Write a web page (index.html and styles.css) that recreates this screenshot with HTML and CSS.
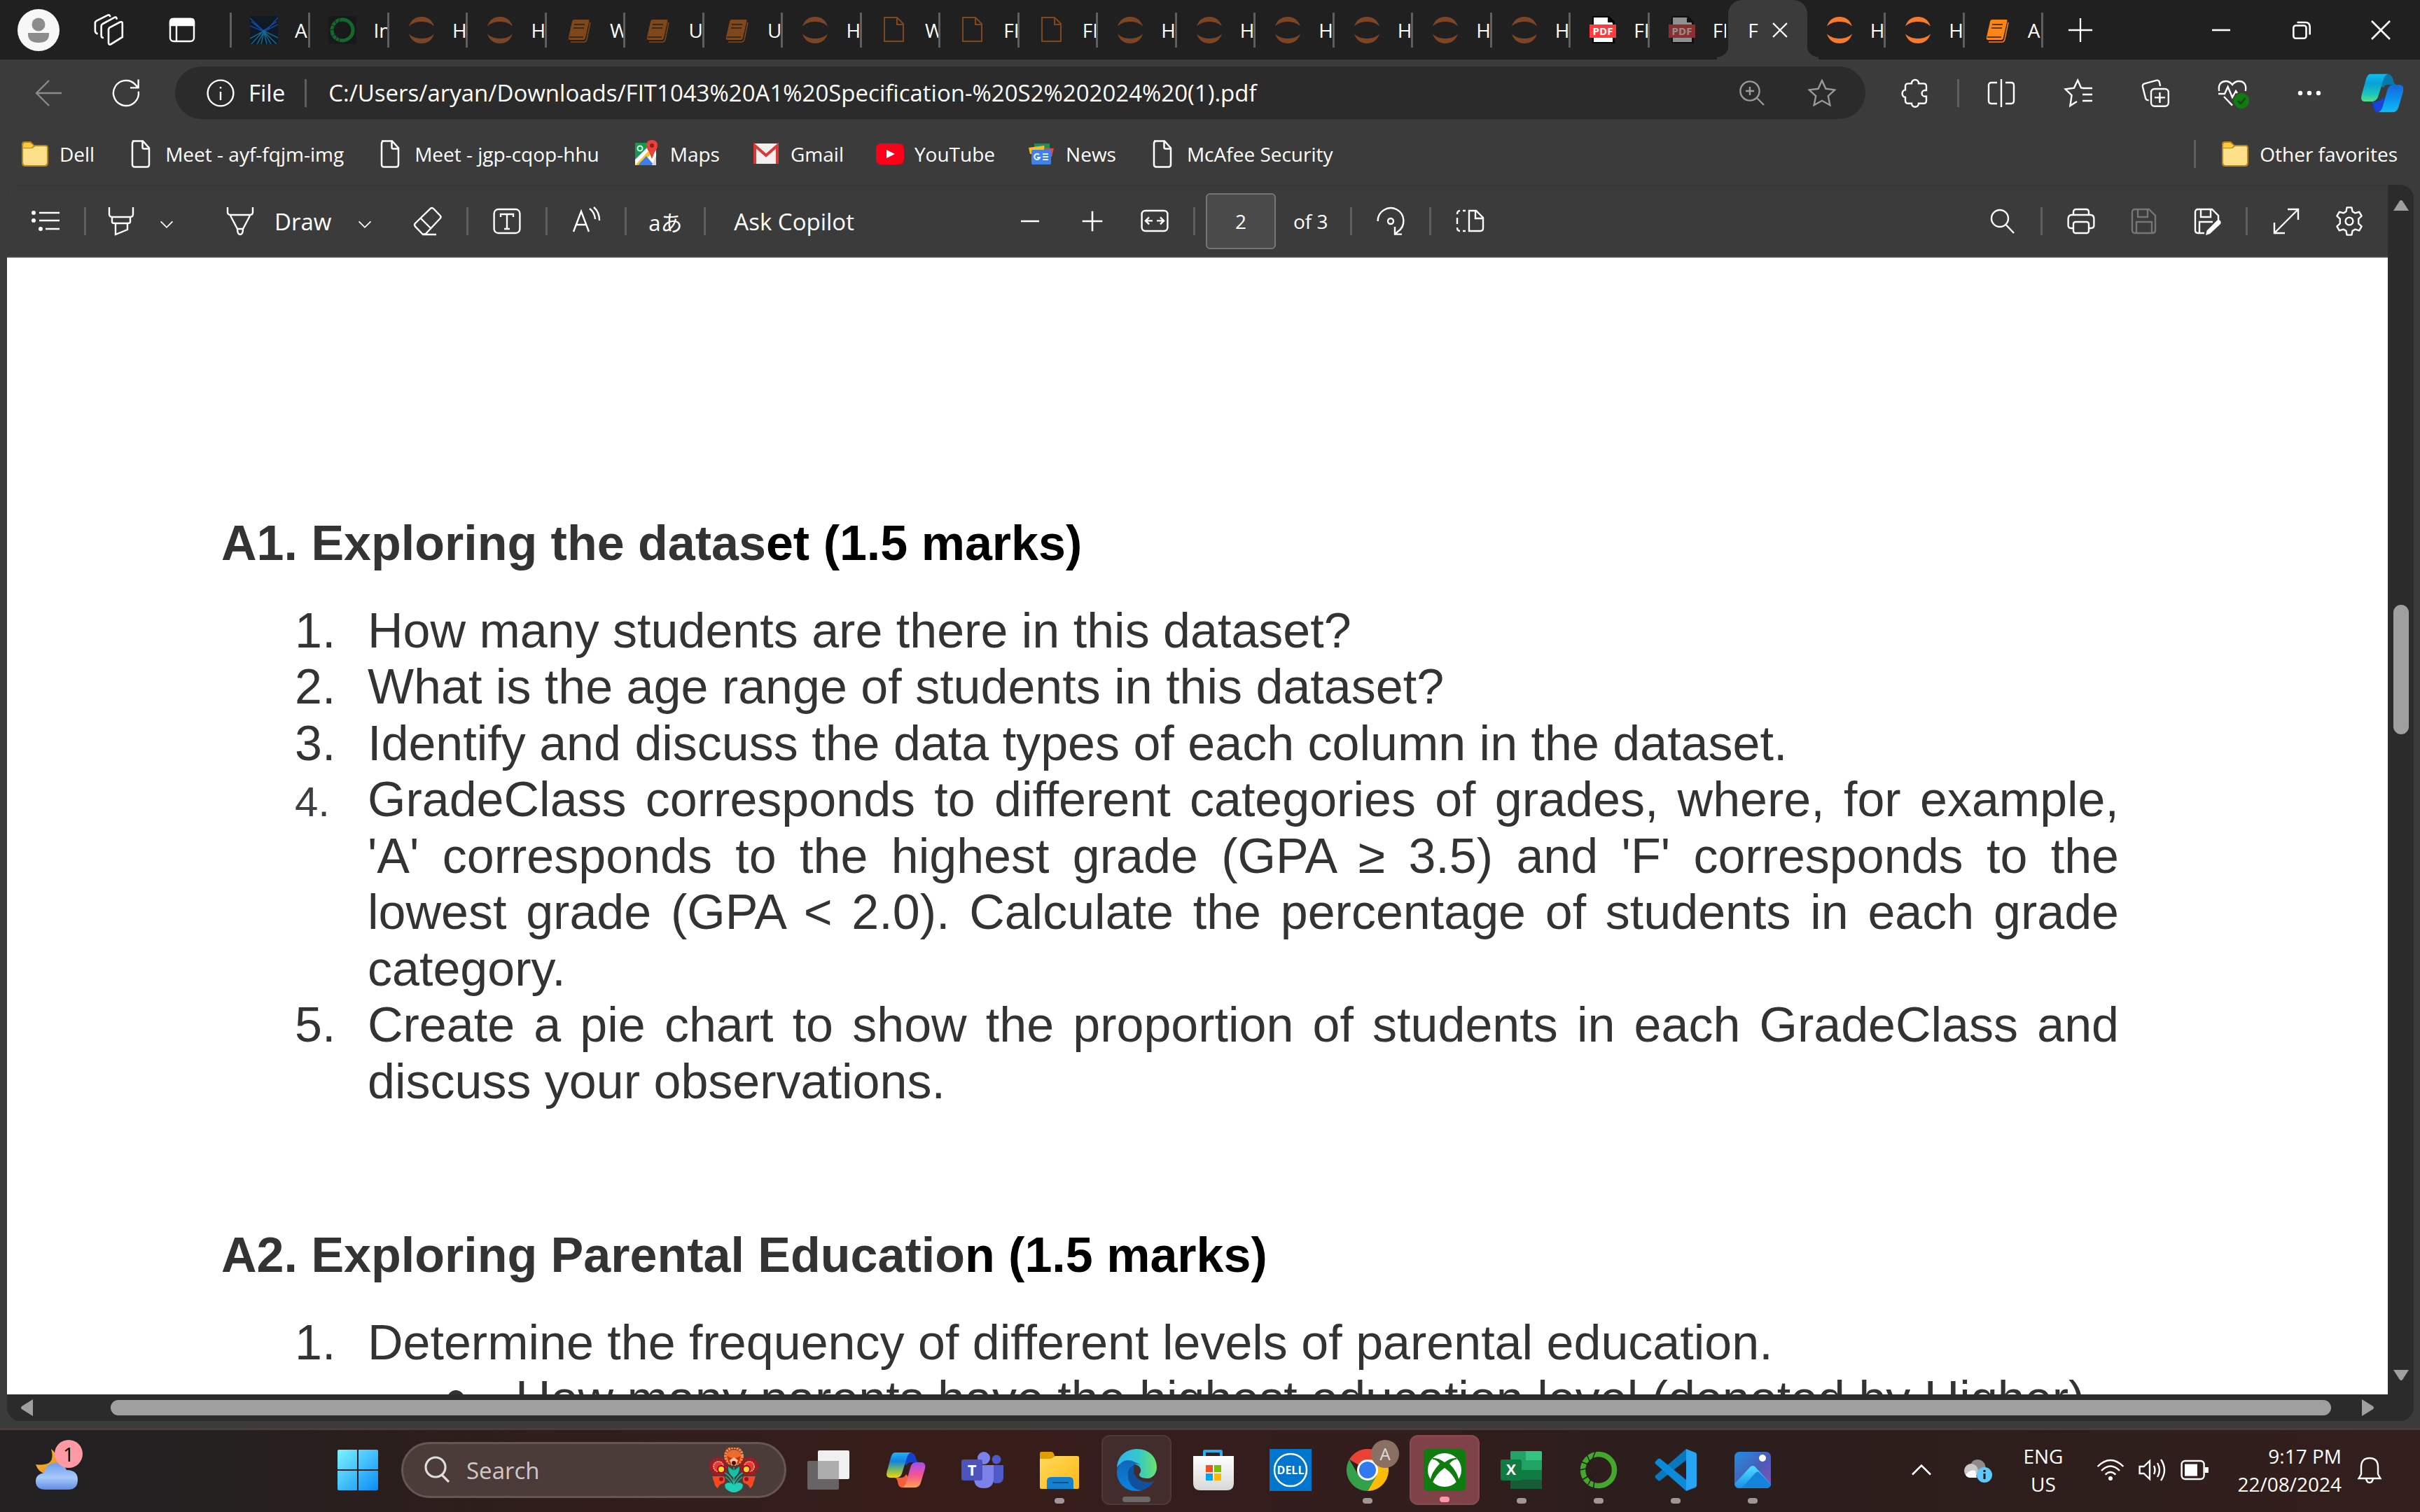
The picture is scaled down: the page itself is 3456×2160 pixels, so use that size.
FILE: index.html
```html
<!DOCTYPE html>
<html lang="en">
<head>
<meta charset="utf-8">
<title>FIT1043 A1 Specification</title>
<link rel="stylesheet" href="styles.css">
</head>
<body>
<svg class="defs" aria-hidden="true">
  <defs>
    <linearGradient id="g-win" x1="0" y1="0" x2="1" y2="1"><stop offset="0" stop-color="#7df3ff"/><stop offset="1" stop-color="#0a8cf5"/></linearGradient>
    <linearGradient id="g-cloud" x1="0" y1="0" x2="0" y2="1"><stop offset="0" stop-color="#6c9cec"/><stop offset=".55" stop-color="#a9caf8"/><stop offset="1" stop-color="#5f8de6"/></linearGradient>
    <linearGradient id="g-moon" x1="0" y1="0" x2="1" y2="1"><stop offset="0" stop-color="#ffc247"/><stop offset="1" stop-color="#e58a0a"/></linearGradient>
    <linearGradient id="g-cp1" x1="0" y1="0" x2="0" y2="1"><stop offset="0" stop-color="#22b0f6"/><stop offset=".35" stop-color="#1484e0"/><stop offset=".7" stop-color="#7cba58"/><stop offset="1" stop-color="#f8d40c"/></linearGradient>
    <linearGradient id="g-cp2" x1="0" y1="0" x2="0" y2="1"><stop offset="0" stop-color="#a24ef0"/><stop offset=".5" stop-color="#f25592"/><stop offset="1" stop-color="#ffa14e"/></linearGradient>
    <linearGradient id="g-cb1" x1="0" y1="0" x2="0" y2="1"><stop offset="0" stop-color="#12bcee"/><stop offset=".35" stop-color="#08a0d8"/><stop offset=".75" stop-color="#1cc8b8"/><stop offset="1" stop-color="#58e084"/></linearGradient>
    <linearGradient id="g-cb2" x1="0" y1="0" x2="0" y2="1"><stop offset="0" stop-color="#1468dc"/><stop offset=".5" stop-color="#0c90ee"/><stop offset="1" stop-color="#12bcf4"/></linearGradient>
    <linearGradient id="g-fold" x1="0" y1="0" x2="1" y2="1"><stop offset="0" stop-color="#ffd95c"/><stop offset="1" stop-color="#fdb913"/></linearGradient>
    <linearGradient id="g-edge" x1="0" y1="0" x2="1" y2="0"><stop offset="0" stop-color="#2fb4f2"/><stop offset=".55" stop-color="#35c8c8"/><stop offset="1" stop-color="#6be36a"/></linearGradient>
    <linearGradient id="g-edge2" x1="0" y1="0" x2="0" y2="1"><stop offset="0" stop-color="#1267b8"/><stop offset="1" stop-color="#0a84e0"/></linearGradient>
    <linearGradient id="g-photo" x1="0" y1="0" x2="1" y2="1"><stop offset="0" stop-color="#1f8fe4"/><stop offset=".55" stop-color="#4a5cb8"/><stop offset="1" stop-color="#8a52b4"/></linearGradient>
    <linearGradient id="g-peak" x1="0" y1="0" x2="0" y2="1"><stop offset="0" stop-color="#4fe0ff"/><stop offset="1" stop-color="#1a8fe8"/></linearGradient>
    <linearGradient id="g-bag" x1="0" y1="0" x2="0" y2="1"><stop offset="0" stop-color="#fff"/><stop offset="1" stop-color="#d8d8d8"/></linearGradient>
  </defs>

  <symbol id="i-jup" viewBox="0 0 40 40"><path d="M2 14.500C5 5 12 1 20 1s15 4 18 13.500C33 10 27 8 20 8S7 10 2 14.500zM2 25.500C5 35 12 39 20 39s15-4 18-13.500C33 30 27 32 20 32S7 30 2 25.500z" fill="currentColor"/></symbol>
  <symbol id="i-book" viewBox="0 0 40 40"><path d="M13 5h20q2 0 1.500 2L29 31q-.5 3-3 3H7q-3 0-2-4l5-22q.7-3 3-3z" fill="currentColor"/><path d="M13 12h15M12 17h15M6 30h20" stroke="#202020" stroke-width="1.500" fill="none"/><path d="M36 9l-5 24q-1 4-4 4H8" fill="none" stroke="currentColor" stroke-width="1.500"/></symbol>
  <symbol id="i-file" viewBox="0 0 40 40"><path d="M6 26V2h18l9 9v25H6V26M24 2v10h9" fill="none" stroke="currentColor" stroke-width="2"/></symbol>
  <symbol id="i-pdf" viewBox="0 0 40 40"><path d="M5 0h24l8 8v31H5z" fill="#000"/><path d="M7 2h20l7 8v27H7z" fill="#fff"/><path d="M27 2v7h7z" fill="#000"/><rect x="1" y="12" width="38" height="19" fill="#ff3b3f"/><text x="20" y="27" text-anchor="middle" font-family="Open Sans, sans-serif" font-weight="700" font-size="15" fill="#fff">PDF</text></symbol>
  <symbol id="i-page" viewBox="0 0 40 40"><path d="M8 1.500h15l9 10V35q0 3.500-3.500 3.500h-17Q8 38.500 8 35V5q0-3.500 3.500-3.500zM22.500 2v8.500q0 2 2 2H32" fill="none" stroke="currentColor" stroke-width="2.500"/></symbol>
  <symbol id="i-folder" viewBox="0 0 40 40"><path d="M1 6q0-4 4-4h9l5 5h16q4 0 4 4v22q0 5-5 5H6q-5 0-5-5z" fill="#b5851a"/><path d="M3 12h13l4-3h15q2 0 2 2v21q0 4-4 4H7q-4 0-4-4z" fill="#ffe08a"/><path d="M3 10V7q0-3 3-3h7l5 4-3 3H3z" fill="#ffc83d"/></symbol>

  <symbol id="i-search" viewBox="0 0 20 20"><circle cx="8.500" cy="8" r="6"/><path d="M12.800 12.500l5.700 6"/></symbol>
  <symbol id="i-chev" viewBox="0 0 20 20"><path d="M3 7l7 7 7-7"/></symbol>
  <symbol id="i-star" viewBox="0 0 20 20"><path d="M10 1l2.700 5.900 6.500.8-4.800 4.400 1.300 6.500L10 15.400l-5.700 3.200 1.300-6.500L.8 7.700l6.500-.8z"/></symbol>
  <symbol id="i-save" viewBox="0 0 20 20"><path d="M3.500 1.500h10L18 6v10.500q0 2-2 2H3.500q-2 0-2-2v-13q0-2 2-2zM5.500 1.500v5.500h7V1.500M4.500 18.500v-8h11v8"/></symbol>
  <symbol id="i-copilot" viewBox="0 0 60 60"><path d="M37 5q6 0 8 8 1 5 4 6H38q-4 0-6 4l-4-2 4-13q1-3 5-3z" fill="#1440cc"/><path d="M15 5h24q-5 0-7 8l-7 22q-2 6-9 6H8q-7 0-4-10l5-18q2-8 6-8z" fill="url(#g-cp1)"/><path d="M15 41h8q6 0 8-5l3 4-4 12q-1 3-5 3-5 0-6-8-1-5-4-6z" fill="#f4603c"/><path d="M45 19h7q8 0 6 9l-6 20q-2 7-8 7H25q4-1 6-7l6-21q2-8 8-8z" fill="url(#g-cp2)"/></symbol>
  <symbol id="i-copilot-blue" viewBox="3 4 55 52"><path d="M37 5q6 0 8 8 1 5 4 6H38q-4 0-6 4l-4-2 4-13q1-3 5-3z" fill="#0878a8"/><path d="M15 5h24q-5 0-7 8l-7 22q-2 6-9 6H8q-7 0-4-10l5-18q2-8 6-8z" fill="url(#g-cb1)"/><path d="M15 41h8q6 0 8-5l3 4-4 12q-1 3-5 3-5 0-6-8-1-5-4-6z" fill="#1446dc"/><path d="M45 19h7q8 0 6 9l-6 20q-2 7-8 7H25q4-1 6-7l6-21q2-8 8-8z" fill="url(#g-cb2)"/></symbol>
  <symbol id="i-ring" viewBox="0 0 40 40"><circle cx="20" cy="20" r="15" fill="none" stroke="currentColor" stroke-width="5"/><path d="M3 12l10 4M2 20l9-2M5 29l8-5M10 34l4-8M9 6l4 9M17 2l-3 8M15 38l1-8" stroke="#1c1f1e" stroke-width="1" fill="none"/></symbol>
</svg>

<header class="tabstrip">
  <div class="tab-tools">
    <button class="avatar" aria-label="Profile"><svg viewBox="0 0 60 60"><circle cx="30" cy="30" r="30" fill="#f7f7f7"/><circle cx="30" cy="22" r="9.500" fill="#8c8c8c"/><path d="M15 34h30v2q0 12-15 12T15 36z" fill="#8c8c8c"/></svg></button>
    <button class="icon-btn" aria-label="Workspaces"><svg class="ic lg" viewBox="0 0 20 20"><path d="M10.500 8.500l7-3.700q1.500-.6 1.500 1v8.700l-7.500 4.700q-1.500.6-1.500-1v-8.700zM6.800 15q-1.500 0-1.500-1.600V7.500q0-1 1-1.600l8-4.400M14.300 1.500q1 0 1 1.600M3 12.500Q1.300 12 1.300 10.500V5.500q0-1 1-1.600L9.500.3q1.500-.5 1.500 1.200"/></svg></button>
    <button class="icon-btn" aria-label="Tab actions"><svg class="ic" viewBox="0 0 20 20"><rect x="1.500" y="2" width="17" height="16" rx="2.500"/><path d="M1.500 6V4Q1.500 2 3.500 2h13q2 0 2 2v2.500h-17z" fill="currentColor"/><path d="M6 6v12"/></svg></button>
  </div>
  <nav class="tabs" aria-label="Open tabs">
    <a class="tab" href="#"><svg class="fav" viewBox="0 0 40 40"><path d="M0 0h40v40H0z" fill="#101a24"/><path d="M0 3l18 17h6L40 2M2 8l17 13L38 8M0 14l20 8 20-10" stroke="#1746a0" stroke-width="1.500" fill="none"/><path d="M2 40l17-19L38 40M10 40l10-18 10 18M0 32l20-11 20 10M16 40l4-18 4 18" stroke="#156a90" stroke-width="1.500" fill="none"/></svg><span>A</span></a>
    <a class="tab" href="#"><svg class="fav green"><use href="#i-ring"/></svg><span>In</span></a>
    <a class="tab" href="#"><svg class="fav rust"><use href="#i-jup"/></svg><span>H</span></a>
    <a class="tab" href="#"><svg class="fav rust"><use href="#i-jup"/></svg><span>H</span></a>
    <a class="tab" href="#"><svg class="fav brown"><use href="#i-book"/></svg><span>W</span></a>
    <a class="tab" href="#"><svg class="fav brown"><use href="#i-book"/></svg><span>U</span></a>
    <a class="tab" href="#"><svg class="fav brown"><use href="#i-book"/></svg><span>U</span></a>
    <a class="tab" href="#"><svg class="fav rust"><use href="#i-jup"/></svg><span>H</span></a>
    <a class="tab" href="#"><svg class="fav brown"><use href="#i-file"/></svg><span>W</span></a>
    <a class="tab" href="#"><svg class="fav brown"><use href="#i-file"/></svg><span>FI</span></a>
    <a class="tab" href="#"><svg class="fav brown"><use href="#i-file"/></svg><span>FI</span></a>
    <a class="tab" href="#"><svg class="fav rust"><use href="#i-jup"/></svg><span>H</span></a>
    <a class="tab" href="#"><svg class="fav rust"><use href="#i-jup"/></svg><span>H</span></a>
    <a class="tab" href="#"><svg class="fav rust"><use href="#i-jup"/></svg><span>H</span></a>
    <a class="tab" href="#"><svg class="fav rust"><use href="#i-jup"/></svg><span>H</span></a>
    <a class="tab" href="#"><svg class="fav rust"><use href="#i-jup"/></svg><span>H</span></a>
    <a class="tab" href="#"><svg class="fav rust"><use href="#i-jup"/></svg><span>H</span></a>
    <a class="tab" href="#"><svg class="fav"><use href="#i-pdf"/></svg><span>FI</span></a>
    <a class="tab plain" href="#"><svg class="fav dim"><use href="#i-pdf"/></svg><span>FI</span></a>
    <div class="tab active"><span>F</span><button class="tab-close" aria-label="Close tab"><svg class="ic" viewBox="0 0 20 20"><path d="M1 1l18 18M19 1L1 19"/></svg></button></div>
    <a class="tab" href="#"><svg class="fav orange"><use href="#i-jup"/></svg><span>H</span></a>
    <a class="tab" href="#"><svg class="fav orange"><use href="#i-jup"/></svg><span>H</span></a>
    <a class="tab" href="#"><svg class="fav amber"><use href="#i-book"/></svg><span>A</span></a>
  </nav>
  <div class="window-tools">
    <button class="new-tab" aria-label="New tab"><svg class="ic" viewBox="0 0 20 20"><path d="M10 1v18M1 10h18"/></svg></button>
    <div class="window-btns">
      <button aria-label="Minimize"><svg class="ic sm" viewBox="0 0 20 20"><path d="M0 10h20"/></svg></button>
      <button aria-label="Restore"><svg class="ic sm" viewBox="0 0 20 20"><rect x="1" y="5" width="14" height="14" rx="2.500"/><path d="M5 1.500h9q5 0 5 5V15"/></svg></button>
      <button aria-label="Close"><svg class="ic sm" viewBox="0 0 20 20"><path d="M0 0l20 20M20 0L0 20"/></svg></button>
    </div>
  </div>
</header>

<div class="address-row">
  <button class="icon-btn grey" aria-label="Back"><svg class="ic" viewBox="0 0 20 20"><path d="M10 1l-9 9 9 9M1 10h18"/></svg></button>
  <button class="icon-btn" aria-label="Refresh"><svg class="ic" viewBox="0 0 20 20"><path d="M18.900 8.800A9 9 0 1 1 16.500 3.800L18.500 6M18.800.3v5.900H13"/></svg></button>
  <div class="address">
    <svg class="ic" viewBox="0 0 20 20"><circle cx="10" cy="10" r="9.200"/><path d="M10 9v6M10 5.500v1.300"/></svg>
    <span class="scheme">File</span>
    <input class="url" type="text" aria-label="Address" value="C:/Users/aryan/Downloads/FIT1043%20A1%20Specification-%20S2%202024%20(1).pdf">
    <button class="in-addr" aria-label="Zoom"><svg class="ic" viewBox="0 0 20 20"><circle cx="8.500" cy="8.500" r="6.800"/><path d="M13.500 13.500l5 5M8.500 5.500v6M5.500 8.500h6"/></svg></button>
    <button class="in-addr" aria-label="Add favorite"><svg class="ic"><use href="#i-star"/></svg></button>
  </div>
  <button class="icon-btn" aria-label="Extensions"><svg class="ic" viewBox="0 0 20 20"><path d="M7.500 3.200V3a2.500 2.500 0 0 1 5 0v.2H16q2 0 2 2V8h-1a2.200 2.200 0 0 0 0 4.400h1v3q0 2-2 2h-3.500a2.500 2.500 0 0 1-5 0H5q-2 0-2-2V13a2.700 2.700 0 0 1 0-5.300V5.200q0-2 2-2z"/></svg></button>
  <i class="sep"></i>
  <button class="icon-btn" aria-label="Split screen"><svg class="ic" viewBox="0 0 20 20"><path d="M10 0v20M7 2.500H3q-2 0-2 2v11q0 2 2 2h4M13 2.500h4q2 0 2 2v11q0 2-2 2h-4"/></svg></button>
  <button class="icon-btn" aria-label="Favorites"><svg class="ic" viewBox="0 0 20 20"><path d="M14 6.500l-2-.3L9.600.8 7 6.300l-6.200.9 4.500 4.400L4.200 19l4.800-3M13 6.500h7M13 11h7M13 15.500h7"/></svg></button>
  <button class="icon-btn" aria-label="Collections"><svg class="ic" viewBox="0 0 20 20"><rect x="7" y="7" width="12.400" height="12.400" rx="2.500"/><path d="M13.200 9.500v7.500M9.500 13.200H17M13.500 5L13 2.500q-.4-2-2.300-1.600L2.500 3.200Q.6 3.700 1 5.500l2 8q.5 1.800 2.300 1.500"/></svg></button>
  <button class="icon-btn" aria-label="Browser essentials"><svg class="ic" viewBox="0 0 20 20"><path d="M.6 8.500C-.5 3 3 1.500 5.300 1.500 8 1.500 10 4 10 4s2-2.500 4.700-2.500c2.500 0 5.800 1.500 4.700 7M0 10.500h4.500L6.800 5.500l3.200 7.500 2.500-4.500 1 1.500M4 12.500l6 6.300"/><circle cx="16.500" cy="15.500" r="5.500" fill="#107c10" stroke="none"/><path d="M14 15.500l2 2 3.300-4" stroke="#1b3f1b"/></svg></button>
  <button class="icon-btn" aria-label="Settings and more"><svg class="ic" viewBox="0 0 20 20"><g fill="currentColor" stroke="none"><circle cx="3.500" cy="10" r="1.600"/><circle cx="10" cy="10" r="1.600"/><circle cx="16.500" cy="10" r="1.600"/></g></svg></button>
  <button class="icon-btn copilot-btn" aria-label="Copilot"><svg class="app"><use href="#i-copilot-blue"/></svg></button>
</div>

<nav class="bookmarks" aria-label="Favorites bar">
  <a href="#"><svg class="bm"><use href="#i-folder"/></svg>Dell</a>
  <a href="#"><svg class="bm"><use href="#i-page"/></svg>Meet - ayf-fqjm-img</a>
  <a href="#"><svg class="bm"><use href="#i-page"/></svg>Meet - jgp-cqop-hhu</a>
  <a href="#"><svg class="bm" viewBox="0 0 40 40"><path d="M5 4h30v32H5z" fill="#fff"/><path d="M5 4h24L5 28z" fill="#149a52"/><path d="M5 36l30-32v8L13 36z" fill="#fbc02d"/><path d="M9 36l12-13 11 13z" fill="#3f7ee8"/><path d="M29 36h6V22z" fill="#d6d9dc"/><circle cx="12" cy="12" r="3.500" fill="none" stroke="#d8f0e0" stroke-width="2"/><path d="M29 0q8 0 8 8 0 4-4 9l-4 10-4-10q-4-5-4-9 0-8 8-8z" fill="#e8413a"/><circle cx="29" cy="8" r="3" fill="#8c1d18"/></svg>Maps</a>
  <a href="#"><svg class="bm" viewBox="0 0 40 40"><rect x="2" y="5" width="36" height="29" rx="2" fill="#f1efef"/><path d="M4 34V8l16 14L36 8v26" fill="none" stroke="#d93a36" stroke-width="4"/></svg>Gmail</a>
  <a href="#"><svg class="bm" viewBox="0 0 40 40"><rect y="5" width="40" height="30" rx="7" fill="#fb0019"/><path d="M15 14l12 6-12 6z" fill="#fff"/></svg>YouTube</a>
  <a href="#"><svg class="bm" viewBox="0 0 40 40"><path d="M10 5h22v14H10z" fill="#13955a"/><path d="M2 11l22-3 3 12H4z" fill="#fbbc1c"/><path d="M24 11l14 1-3 12H24z" fill="#e4463a"/><rect x="6" y="14" width="28" height="21" rx="2" fill="#3f80ee"/><path d="M17 21a4 4 0 1 0 1 4h-4M22 20h8M22 24h8M22 28h8" stroke="#e6f0ff" stroke-width="2.200" fill="none"/></svg>News</a>
  <a href="#"><svg class="bm"><use href="#i-page"/></svg>McAfee Security</a>
  <div class="other"><i class="sep"></i><a href="#"><svg class="bm"><use href="#i-folder"/></svg>Other favorites</a></div>
</nav>

<main class="viewer">
  <div class="viewer-main">
    <div class="pdf-toolbar">
      <button class="tool" aria-label="Contents"><svg class="ic" viewBox="0 0 20 20"><path d="M5.500 4H20M5.500 9.500H20M10 15.500h10"/><g fill="currentColor" stroke="none"><circle cx="1.500" cy="4" r="1.500"/><circle cx="1.500" cy="9.500" r="1.500"/><circle cx="6.500" cy="15.500" r="1.500"/></g></svg></button>
      <i class="sep"></i>
      <button class="tool mid" aria-label="Highlight"><svg class="ic" viewBox="0 0 20 20"><path d="M1.500 0v5q0 2 2 2h13q2 0 2-2V0M3.500 7v3.500q0 1 2 1h9q2 0 2-1V7M6 11.500v8l8.500-3.500v-4.500"/></svg></button>
      <button class="tool drop" aria-label="Highlight colors"><svg class="ic tiny"><use href="#i-chev"/></svg></button>
      <button class="draw"><svg class="ic" viewBox="0 0 20 20"><path d="M1 0v3.500q0 2 2 2h14q2 0 2-2V0M3 6l5 9.500h4L17 6M8 15.500q0 4 2 4t2-4"/></svg>Draw</button>
      <button class="tool drop" aria-label="Draw options"><svg class="ic tiny"><use href="#i-chev"/></svg></button>
      <button class="tool eraser" aria-label="Erase"><svg class="ic" viewBox="0 0 20 20"><path d="M1 11.500L12 .8q1-.8 2 .2l4.800 5q1 1 0 2L8.500 19l-2 .5-5.500-5.700q-1-1.200 0-2.300zM5 8l7.500 7.500M6.500 19.500H16"/></svg></button>
      <i class="sep"></i>
      <button class="tool" aria-label="Add text"><svg class="ic" viewBox="0 0 20 20"><rect x=".8" y="1.500" width="18.400" height="17" rx="3"/><path d="M5.500 7V5h9v2M10 5v10.500M8 15.500h4"/></svg></button>
      <i class="sep"></i>
      <button class="tool" aria-label="Read aloud"><svg class="ic" viewBox="0 0 20 20"><path d="M1 17.500L6.500 3 12 17.500M3 12.500h7M12.500 1q3.500 2.500 4 7.500M15.500 0q4 3.500 4 9.500"/></svg></button>
      <i class="sep"></i>
      <button class="tool translate" aria-label="Translate">aあ</button>
      <i class="sep"></i>
      <button class="ask">Ask Copilot</button>
      <div class="zoom-group">
        <button class="tool" aria-label="Zoom out"><svg class="ic sm" viewBox="0 0 20 20"><path d="M0 10h20"/></svg></button>
        <button class="tool" aria-label="Zoom in"><svg class="ic sm" viewBox="0 0 20 20"><path d="M10 -1v22M-1 10h22"/></svg></button>
        <button class="tool" aria-label="Fit to width"><svg class="ic" viewBox="0 0 20 20"><rect x=".8" y="2.500" width="18.400" height="14.500" rx="2.500"/><path d="M8.500 9.700H4M6 7.200L3.500 9.700 6 12.200M11.500 9.700H16M14 7.200l2.500 2.500-2.500 2.500"/></svg></button>
      </div>
      <i class="sep"></i>
      <input class="page-no" type="text" aria-label="Page number" value="2"><span class="page-of">of 3</span>
      <i class="sep"></i>
      <button class="tool" aria-label="Rotate"><svg class="ic" viewBox="0 0 20 20"><path d="M.8 10A9.200 9.200 0 1 1 15 17.500L13.500 19M13 14v5.300h5"/><circle cx="10" cy="10" r="2"/></svg></button>
      <i class="sep"></i>
      <button class="tool" aria-label="Page view"><svg class="ic" viewBox="0 0 20 20"><path d="M9.500 2.500h5l5 5V15q0 2-2 2h-8zM14 2.500V8h5.500M7 2.500H5M3 2.500Q1 2.500 1 5M1 7.500V12M1 14.500Q1 17 3 17M5 17h2"/></svg></button>
      <div class="tool-end">
        <button class="tool" aria-label="Find"><svg class="ic"><use href="#i-search"/></svg></button>
        <i class="sep"></i>
        <div class="tool-group">
          <button class="tool" aria-label="Print"><svg class="ic" viewBox="0 0 20 20"><path d="M4.500 5.500V3.500q0-2 2-2h7q2 0 2 2v2M4.500 15H3q-2.200 0-2.200-2V8.500q0-3 2.500-3h13.400q2.500 0 2.500 3V13q0 2-2.200 2h-1.500"/><rect x="4.500" y="10.500" width="11" height="8" rx="1.500"/></svg></button>
          <button class="tool faint" aria-label="Save"><svg class="ic"><use href="#i-save"/></svg></button>
          <button class="tool" aria-label="Save as"><svg class="ic" viewBox="0 0 20 20"><path d="M18 9V6l-4.500-4.500h-10q-2 0-2 2v13q0 2 2 2H8M5.500 1.500v5.500h7V1.500M4.500 18.500v-8H14"/><path d="M18.500 9q2 1 1 3L12 19l-3 1 .8-3.200L17 9.500q.8-.8 1.500-.5z" fill="currentColor" stroke="none"/></svg></button>
        </div>
        <i class="sep"></i>
        <div class="tool-group">
          <button class="tool" aria-label="Full screen"><svg class="ic" viewBox="0 0 20 20"><path d="M1.500 18.500l17-17M11 1.500h7.500V9M1.500 11v7.500H9"/></svg></button>
          <button class="tool" aria-label="PDF settings"><svg class="ic" viewBox="0 0 20 20"><circle cx="10" cy="10" r="2.700"/><path d="M8.300.2h3.400l.6 2.900 1.900 1.100 2.900-.9 1.700 3-2.200 2v3.400l2.200 2-1.700 3-2.900-.9-1.900 1.100-.6 2.900H8.300l-.6-2.900-1.900-1.100-2.900.9-1.700-3 2.200-2V8.300l-2.200-2 1.700-3 2.900.9 1.900-1.100z" stroke-linejoin="round"/></svg></button>
        </div>
      </div>
    </div>

    <article class="page">
      <h2>A1. Exploring the datas<span class="ink">et (1.5 marks)</span></h2>
      <ol class="tasks">
        <li><span class="num">1.</span><p>How many students are there in this dataset?</p></li>
        <li><span class="num">2.</span><p>What is the age range of students in this dataset?</p></li>
        <li><span class="num">3.</span><p>Identify and discuss the data types of each column in the dataset.</p></li>
        <li><span class="num minor">4.</span><p>GradeClass corresponds to different categories of grades, where, for example, 'A' corresponds to the highest grade (GPA ≥ 3.5) and 'F' corresponds to the lowest grade (GPA &lt; 2.0). Calculate the percentage of students in each grade category.</p></li>
        <li><span class="num">5.</span><p>Create a pie chart to show the proportion of students in each GradeClass and discuss your observations.</p></li>
      </ol>
      <h2>A2. Exploring Parental Educatio<span class="ink">n (1.5 marks)</span></h2>
      <ol class="tasks">
        <li><span class="num">1.</span><div><p>Determine the frequency of different levels of parental education.</p>
          <ul class="subtasks"><li>How many parents have the highest education level (denoted by Higher)</li></ul></div></li>
      </ol>
    </article>

    <div class="hscroll">
      <svg class="arrow" viewBox="0 0 20 24"><path d="M19 0v24L3 14q-2-2 0-4z"/></svg>
      <div class="hthumb"></div>
      <svg class="arrow" viewBox="0 0 20 24"><path d="M1 0v24l16-10q2-2 0-4z"/></svg>
    </div>
  </div>
  <div class="vscroll">
    <svg class="arrow" viewBox="0 0 24 20"><path d="M1 17h22L14 3q-2-2-4 0z"/></svg>
    <div class="vtrack"><div class="vthumb"></div></div>
    <svg class="arrow" viewBox="0 0 24 20"><path d="M1 3h22L14 17q-2 2-4 0z"/></svg>
  </div>
</main>

<footer class="taskbar">
  <button class="weather" aria-label="Weather"><svg class="app" viewBox="0 0 60 60"><path d="M22 0q6 20-10 22-6 1-12 0 4 12 14 13 18 0 20-16Q28 4 22 0z" fill="url(#g-moon)"/><path d="M14 58Q0 58 0 46q0-10 12-12 3-14 17-14 11 0 15 10 16 0 16 14 0 14-14 14z" fill="url(#g-cloud)"/></svg><span class="badge">1</span></button>
  <nav class="apps" aria-label="Taskbar">
    <button class="tile" aria-label="Start"><svg class="app" viewBox="0 0 60 60"><path d="M1 3q0-2 2-2h26v28H1zM31 1h26q2 0 2 2v26H31zM1 31h28v28H3q-2 0-2-2zM31 31h28v26q0 2-2 2H31z" fill="url(#g-win)"/></svg></button>
    <label class="search-pill"><svg class="ic" viewBox="0 0 20 20"><circle cx="9" cy="8" r="7"/><path d="M13.500 13.500l5 5"/></svg><input type="text" placeholder="Search" aria-label="Search">
      <svg class="flower" viewBox="0 0 72 64"><path d="M36 28v30M36 52Q32 40 20 34M36 52q4-12 16-18M36 56Q30 46 24 42M36 56q6-10 12-14" stroke="#13b8a0" stroke-width="1.500" fill="none"/><path d="M28 27l8 6 8-6q1 10-8 16-9-6-8-16z" fill="#15c0a4"/><path d="M36 33v10M23 53q5-6 13 0 8-6 13 0l-1 5q-6 6-12 6t-12-6z" fill="#1fcfb4"/><circle cx="36" cy="14" r="11" fill="#f06a2c"/><circle cx="36" cy="12" r="12" fill="none" stroke="#ff8440" stroke-width="4" stroke-dasharray="3 1"/><path d="M26 12l10 4 10-4-3 10-7 4-7-4z" fill="#c23410"/><path d="M30 18l6-4 6 4-3 7h-6z" fill="#ffc4a4"/><circle cx="36" cy="22" r="3" fill="#5a0a0a"/><g fill="none"><circle cx="14" cy="27" r="8" fill="#e23a34"/><circle cx="14" cy="27" r="11" stroke="#c2101e" stroke-width="4" stroke-dasharray="3 1"/><circle cx="14" cy="27" r="7" stroke="#ff8a70" stroke-width="2" stroke-dasharray="2 1"/><circle cx="58" cy="27" r="8" fill="#e23a34"/><circle cx="58" cy="27" r="11" stroke="#c2101e" stroke-width="4" stroke-dasharray="3 1"/><circle cx="58" cy="27" r="7" stroke="#ff8a70" stroke-width="2" stroke-dasharray="2 1"/></g><circle cx="18" cy="31" r="6" fill="#a00818"/><circle cx="54" cy="31" r="6" fill="#a00818"/><circle cx="18" cy="31" r="4" fill="#ffd42c"/><circle cx="54" cy="31" r="4" fill="#ffd42c"/><path d="M5 41l17 0q3 6-1 10-5 0-8 7-4-2-5-8zM67 41l-17 0q-3 6 1 10 5 0 8 7 4-2 5-8z" fill="#f8481e"/><circle cx="18" cy="45" r="3" fill="#a0102c"/><circle cx="54" cy="45" r="3" fill="#a0102c"/></svg></label>
    <button class="tile" aria-label="Task view"><svg class="app" viewBox="0 0 60 60"><rect x="15" y="2" width="45" height="41" rx="2" fill="#f0f0f0"/><rect y="17" width="45" height="41" rx="2" fill="#666464"/><path d="M15 17h30v26H15z" fill="#adadad"/></svg></button>
    <button class="tile" aria-label="Copilot"><svg class="app"><use href="#i-copilot"/></svg></button>
    <button class="tile" aria-label="Teams"><svg class="app" viewBox="0 0 60 60"><circle cx="50" cy="15" r="6.500" fill="#5059c9"/><path d="M42 23h18v17q0 9-9 9-7 0-9-6z" fill="#5059c9"/><circle cx="32" cy="13" r="9" fill="#7b83eb"/><path d="M18 23h28v19q0 14-14 14T18 42z" fill="#7b83eb"/><rect y="15" width="30" height="30" rx="3" fill="#4b53bc"/><text x="15" y="38" text-anchor="middle" font-family="Open Sans, sans-serif" font-weight="700" font-size="22" fill="#fff">T</text></svg></button>
    <button class="tile" aria-label="File Explorer"><svg class="app" viewBox="0 0 60 60"><path d="M2 7q0-3 2-3h14q3 0 4 3l3 8H2z" fill="#e0a100"/><path d="M2 14h16l6-4h32q2 0 2 2v43q0 2-2 2H4q-2 0-2-2z" fill="url(#g-fold)"/><path d="M12 57V46q0-6 6-6h26q6 0 6 6v11z" fill="#1380d0"/><path d="M20 48h23" stroke="#0a4f8c" stroke-width="2"/></svg><i class="dot"></i></button>
    <button class="tile current" aria-label="Microsoft Edge"><svg class="app" viewBox="0 0 60 60"><path d="M2 27C3 9 16 0 31 0c17 0 28 12 28 26 0 9-6 16-13 16-8 0-13-3-12-6 5-6 1-13-6-14C16 17 5 20 2 27z" fill="url(#g-edge)"/><path d="M28 19C16 11 2 20 2 33c0 15 12 27 27 27 4 0 6 0 9-1-14-2-21-13-20-23 1-8 6-12 10-14 3-1 6 0 8 2-1-2-4-4-8-5z" fill="url(#g-edge2)"/><path d="M27 23c-8 3-10 9-9 16 1 11 8 19 18 20 9-1 15-7 19-13-13 4-27-2-29-14 0-4 0-6 1-9z" fill="#11509c"/></svg><i class="dot wide"></i></button>
    <button class="tile" aria-label="Microsoft Store"><svg class="app" viewBox="0 0 60 60"><path d="M15 13V4q0-3 3-3h22q3 0 3 3v9h-4V5H19v8z" fill="#27b0f4"/><path d="M1 10h58v38q0 11-10 11H11Q1 59 1 48z" fill="url(#g-bag)"/><path d="M19 23h10v10H19z" fill="#f25022"/><path d="M31 23h10v10H31z" fill="#7fba00"/><path d="M19 35h10v10H19z" fill="#00a4ef"/><path d="M31 35h10v10H31z" fill="#ffb900"/></svg></button>
    <button class="tile" aria-label="Dell"><svg class="app" viewBox="0 0 60 60"><path d="M0 0h60v60H0z" fill="#0076ce"/><circle cx="30" cy="30" r="23" fill="none" stroke="#fff" stroke-width="2.500"/><text x="30" y="36" text-anchor="middle" font-family="Open Sans, sans-serif" font-weight="700" font-size="16" fill="#fff">DELL</text></svg></button>
    <button class="tile" aria-label="Chrome"><svg class="app" viewBox="0 0 60 60"><path d="M30 30L4 15A30 30 0 0 1 56 15H30z" fill="#ea4335"/><path d="M30 30L30 15H56A30 30 0 0 1 30 60L43 37.500z" fill="#fbbc05"/><path d="M30 45L43 37.500 30 60A30 30 0 0 1 4 15L17 37.500z" fill="#34a04a"/><circle cx="30" cy="30" r="15" fill="#fff"/><circle cx="30" cy="30" r="12" fill="#3079ee"/></svg><span class="badge user">A</span><i class="dot"></i></button>
    <button class="tile alert" aria-label="Xbox"><svg class="app" viewBox="0 0 60 60"><rect width="60" height="60" rx="6" fill="#107c10"/><circle cx="30" cy="30" r="24" fill="#fff"/><path d="M13 13q8-1 17 6 9-7 17-6 1 2-2 2-4 1-8 6 12 12 14 26l-3 3Q43 36 30 27 17 36 12 50l-3-3q2-14 14-26-4-5-8-6-3 0-2-2z" fill="#107c10"/></svg><i class="dot pink"></i></button>
    <button class="tile" aria-label="Excel"><svg class="app" viewBox="0 0 60 60"><rect x="14" y="3" width="45" height="54" rx="2" fill="#21a366"/><path d="M36 3h21q2 0 2 2v11H36z" fill="#33c481"/><path d="M14 30h22v14H14zM36 30h23v14H36z" fill="#107c41"/><path d="M14 44h45v11q0 2-2 2H16q-2 0-2-2z" fill="#185c37"/><rect y="15" width="30" height="30" rx="3" fill="#107c41"/><text x="15" y="37" text-anchor="middle" font-family="Open Sans, sans-serif" font-weight="700" font-size="21" fill="#fff">X</text></svg><i class="dot"></i></button>
    <button class="tile lime" aria-label="Anaconda"><svg class="app"><use href="#i-ring"/></svg><i class="dot"></i></button>
    <button class="tile" aria-label="Visual Studio Code"><svg class="app" viewBox="0 0 60 60"><path d="M45 0v16L8 45q-2 1-3 0L1 41q-1-2 0-3z" fill="#0877bc"/><path d="M45 60V44L8 14q-2-1-3 0l-4 4q-1 2 0 3z" fill="#0a8ad8"/><path d="M45 0l13 5q2 1 2 3v44q0 2-2 3l-13 5z" fill="#27a5f4"/></svg><i class="dot"></i></button>
    <button class="tile" aria-label="Photos"><svg class="app" viewBox="0 0 60 60"><rect x="4" y="4" width="52" height="52" rx="7" fill="url(#g-photo)"/><circle cx="44" cy="13" r="5" fill="#fff"/><path d="M4 50l22-24q4-4 8 0l22 24q-1 6-7 6H11q-6 0-7-6z" fill="url(#g-peak)"/><path d="M14 56l20-22q3-3 6 0l16 17q-1 5-7 5z" fill="#1583dc"/></svg><i class="dot"></i></button>
  </nav>
  <div class="tray">
    <button class="tray-more" aria-label="Hidden icons"><svg class="ic sm" viewBox="0 0 20 20"><path d="M0 15l10-10 10 10"/></svg></button>
    <button class="tray-btn" aria-label="OneDrive"><svg class="ic" viewBox="0 0 40 40"><g stroke="none"><path d="M9 15q1-10 10-10 8 0 11 8l2 9H8z" fill="#8f8a89"/><circle cx="10" cy="21" r="10" fill="#c9c6c6"/><path d="M2 27q6-8 14-6l2 10H9q-5 0-7-4z" fill="#fff"/><circle cx="29" cy="27" r="11" fill="#5ec8ff"/></g><path d="M29 25v8M29 20v3" stroke="#1c1c1c" stroke-width="3"/></svg></button>
    <button class="lang">ENG<br>US</button>
    <button class="status" aria-label="Network, volume, battery">
      <svg class="ic" viewBox="0 0 20 20"><path d="M.8 7.500q9.200-9 18.400 0M3.500 10.500q6.500-6.500 13 0M6.300 13.300q3.700-3.700 7.400 0"/><circle cx="10" cy="16" r="1.500" fill="currentColor" stroke="none"/></svg>
      <svg class="ic" viewBox="0 0 20 20"><path d="M.8 7.500h3L8 3.500v13l-4.200-4h-3zM11 7q1.500 3 0 6M13.500 5q3 5 0 10M16 2.500q5 7.500 0 15"/></svg>
      <svg class="ic" viewBox="0 0 20 20"><rect x=".8" y="3.500" width="16" height="13" rx="2.500"/><rect x="3" y="5.800" width="9" height="8.500" fill="currentColor" stroke="none"/><path d="M18.700 8v4" stroke-width="2.500"/></svg>
    </button>
    <button class="clock">9:17 PM<br>22/08/2024</button>
    <button class="tray-btn" aria-label="Notifications"><svg class="ic" viewBox="0 0 20 20"><path d="M4 13V8q0-6.500 6-6.500T16 8v5l1.700 3H2.300zM7.500 16q.5 3 2.500 3t2.500-3"/></svg></button>
  </div>
</footer>
</body>
</html>
```
FILE: styles.css
```css
* { box-sizing: border-box; }

body {
  margin: 0;
  height: 100vh;
  display: flex;
  flex-direction: column;
  overflow: hidden;
  background: #3b3b3b;
  color: #fff;
  font-family: "Open Sans", "Noto Sans CJK JP", sans-serif;
  font-size: 28px;
}

button, input { font: inherit; color: inherit; background: none; border: 0; padding: 0; margin: 0; }
button { display: flex; align-items: center; justify-content: center; flex: none; }
a { color: inherit; text-decoration: none; }
svg { display: block; flex: none; }
.defs { position: absolute; width: 0; height: 0; }

/* Line icons */
.ic { width: 40px; height: 40px; fill: none; stroke: currentColor; stroke-width: 1.2; overflow: visible; }
.ic.lg { width: 44px; height: 44px; }
.ic.sm { width: 26px; height: 26px; stroke-width: 2; }
.ic.tiny { width: 24px; height: 24px; stroke-width: 1.5; }
.app { width: 60px; height: 60px; }
.sep { flex: none; width: 3px; height: 40px; background: #5e5e5e; }

/* Tab strip */
.tabstrip { display: flex; height: 85px; background: #202020; flex: none; }
.tab-tools { display: flex; align-items: center; width: 328px; padding-left: 25px; }
.avatar svg { width: 60px; height: 60px; }
.tab-tools .icon-btn { width: 105px; }
.tab-tools .icon-btn:nth-child(2) { margin-left: 17px; }
.tabs { display: flex; flex: 1; min-width: 0; align-items: center; }
.tabs::before { content: ""; width: 3px; height: 50px; background: #5e5e5e; }
.tab {
  flex: 1 1 100px; min-width: 0; height: 50px; display: flex; align-items: center; gap: 24px;
  padding-left: 26px; overflow: hidden; border-right: 3px solid #5e5e5e;
}
.tab span { line-height: 50px; white-space: nowrap; }
.tab.plain { border-right-color: transparent; }
.fav { width: 40px; height: 40px; }
.rust { color: #7d4526; }
.brown { color: #80481a; }
.green { color: #12692c; background: #17191b; }
.orange { color: #f87a2c; }
.amber { color: #ff8412; }
.dim { opacity: .5; }
.tab.active {
  position: relative; height: 85px; overflow: visible; background: #3b3b3b; border: 0;
  border-radius: 20px 20px 0 0; padding: 0 28px; justify-content: space-between; gap: 0;
}
.tab.active::before, .tab.active::after {
  content: ""; position: absolute; bottom: 0; width: 16px; height: 20px;
}
.tab.active::before { right: 100%; background: radial-gradient(circle at 0 0, transparent 16px, #3b3b3b 17px); }
.tab.active::after { left: 100%; background: radial-gradient(circle at 100% 0, transparent 16px, #3b3b3b 17px); }
.tab-close .ic { width: 22px; height: 22px; stroke-width: 2; }
.window-tools { display: flex; width: 538px; align-items: center; justify-content: space-between; }
.new-tab { width: 105px; }
.new-tab .ic { width: 38px; height: 38px; }
.window-btns { display: flex; }
.window-btns button { width: 115px; height: 85px; }
.window-btns button:last-child { width: 112px; }

/* Address row */
.address-row { display: flex; align-items: center; gap: 10px; height: 95px; padding: 0 10px 0 20px; flex: none; }
.icon-btn { width: 100px; height: 75px; }
.grey { color: #8a8a8a; }
.copilot-btn { width: 88px; }
.address {
  flex: 1; min-width: 0; height: 75px; margin: 0 11px 0 10px; padding: 0 42px 0 45px;
  display: flex; align-items: center; border-radius: 38px; background: #2b2b2b; font-size: 33px;
}
.scheme { padding: 0 28px 0 20px; border-right: 3px solid #5e5e5e; line-height: 40px; }
.url { flex: 1; min-width: 0; height: 60px; padding-left: 31px; }
.in-addr { color: #9a9a9a; margin-left: 60px; }

/* Favorites bar */
.bookmarks { display: flex; align-items: center; gap: 46px; height: 80px; padding: 0 32px 0 30px; margin-bottom: 4px; flex: none; }
.bookmarks a { display: flex; align-items: center; gap: 15px; white-space: nowrap; }
.bm { width: 40px; height: 40px; }
.other { margin-left: auto; display: flex; align-items: center; gap: 36px; }

/* PDF viewer */
.viewer { flex: 1; min-height: 0; display: flex; margin: 0 9px 10px 10px; border-radius: 20px; overflow: hidden; background: #2b2b2b; }
.viewer-main { flex: 1; min-width: 0; display: flex; flex-direction: column; }
.pdf-toolbar { display: flex; align-items: center; height: 104px; padding: 0 15px; background: #3b3b3b; border-top: 2px solid #363636; border-bottom: 2px solid #4c4c4c; flex: none; }
.pdf-toolbar .sep { margin: 0 15px; }
.tool { width: 80px; height: 80px; }
.tool.mid { width: 70px; }
.tool.drop { width: 60px; padding-top: 8px; }
.tool.translate { font-size: 31px; }
.draw { gap: 29px; height: 80px; margin-left: 35px; padding: 0 18px 0 20px; font-size: 33px; }
.eraser { margin-left: 20px; }
.ask { height: 80px; padding: 0 25px; font-size: 33px; }
.zoom-group { display: flex; gap: 9px; margin-left: 186px; }
.page-no { width: 100px; height: 80px; border: 2px solid #767676; border-radius: 6px; background: #4a4a4a; text-align: center; }
.page-of { padding: 0 16px 0 25px; }
.tool-end { display: flex; align-items: center; margin-left: auto; }
.tool-group { display: flex; gap: 10px; }
.faint { color: #767676; }

.page {
  flex: 1; min-height: 0; overflow: hidden; background: #fff; color: #333;
  padding: 368px 384px 0 306px;
  font-family: "Liberation Sans", Arial, sans-serif; font-size: 70px; line-height: 1.15;
}
.page h2 { margin: 0 0 44px; font-size: 70px; font-weight: 700; }
.page p { margin: 0; text-align: justify; }
.ink { color: #000; }
.tasks { list-style: none; margin: 0 0 168px; padding: 0 0 0 105px; }
.tasks > li { display: grid; grid-template-columns: 104px 1fr; align-items: baseline; }
.num.minor { font-size: 60px; color: #3c4043; }
.subtasks { list-style: none; margin: 0; padding: 0 0 0 114px; }
.subtasks li { display: flex; align-items: center; gap: 73px; white-space: nowrap; }
.subtasks li::before { content: ""; width: 24px; height: 24px; border-radius: 12px; background: #333; }

.arrow { fill: #9f9f9f; }
.hscroll { display: flex; align-items: center; height: 38px; padding: 0 18px; background: #2b2b2b; flex: none; }
.hscroll .arrow { width: 20px; height: 24px; }
.hthumb { flex: 1; height: 22px; margin: 0 43px 0 110px; border-radius: 11px; background: #9f9f9f; }
.vscroll { width: 37px; display: flex; flex-direction: column; align-items: center; padding: 20px 0 56px; }
.vscroll .arrow { width: 24px; height: 20px; }
.vtrack { flex: 1; padding-top: 560px; }
.vthumb { width: 22px; height: 185px; border-radius: 11px; background: #9f9f9f; }

/* Taskbar */
.taskbar {
  display: flex; align-items: center; height: 120px; flex: none; box-shadow: inset 0 3px #4a3e3d;
  background: linear-gradient(90deg, #222020 0%, #232020 8%, #2e1e1b 20%, #371d1a 38%, #351d1c 50%, #2c1e1d 68%, #2e1e1c 88%, #331f1d 98%);
}
.weather { position: relative; padding-left: 51px; width: 163px; height: 100px; justify-content: flex-start; }
.badge {
  position: absolute; left: 78px; top: 7px; width: 40px; height: 40px; border-radius: 20px;
  background: #ff99a4; color: #000; font-size: 28px; line-height: 40px; text-align: center;
}
.badge.user { left: 55px; background: #8c6f63; color: #ddd; font-size: 24px; }
.apps { display: flex; align-items: center; gap: 10px; margin-left: 298px; }
.tile { position: relative; width: 100px; height: 100px; border-radius: 12px; }
.tile.current { background: #432d2c; border: 2px solid #4d3a38; }
.tile.alert { background: #7f4248; border: 2px solid #8a4a50; }
.tile.lime { color: #43a82c; }
.dot { position: absolute; bottom: 2px; left: 50%; width: 14px; height: 8px; margin-left: -7px; border-radius: 4px; background: #9f9695; }
.dot.wide { width: 40px; margin-left: -20px; background: #6d6766; }
.dot.pink { background: #ff99a4; }
.search-pill {
  display: flex; align-items: center; width: 550px; height: 80px; margin-left: 2px; padding: 0 36px 0 28px;
  border: 3px solid #665755; border-radius: 40px; background: #4b3b39; font-size: 33px; color: #ddd;
}
.search-pill .ic { stroke-width: 1.6; }
.search-pill input { flex: 1; min-width: 0; margin-left: 22px; }
.search-pill input::placeholder { color: #d0c8c7; opacity: 1; }
.flower { width: 72px; height: 64px; }
.tray { display: flex; align-items: center; margin-left: auto; padding-right: 52px; }
.tray button { line-height: 40px; }
.tray-more { width: 40px; margin-right: 41px; }
.tray-btn { width: 40px; }
.lang { margin: 0 48px 0 44px; text-align: center; }
.status { gap: 20px; }
.clock { margin: 0 20px 0 41px; text-align: right; }
```
